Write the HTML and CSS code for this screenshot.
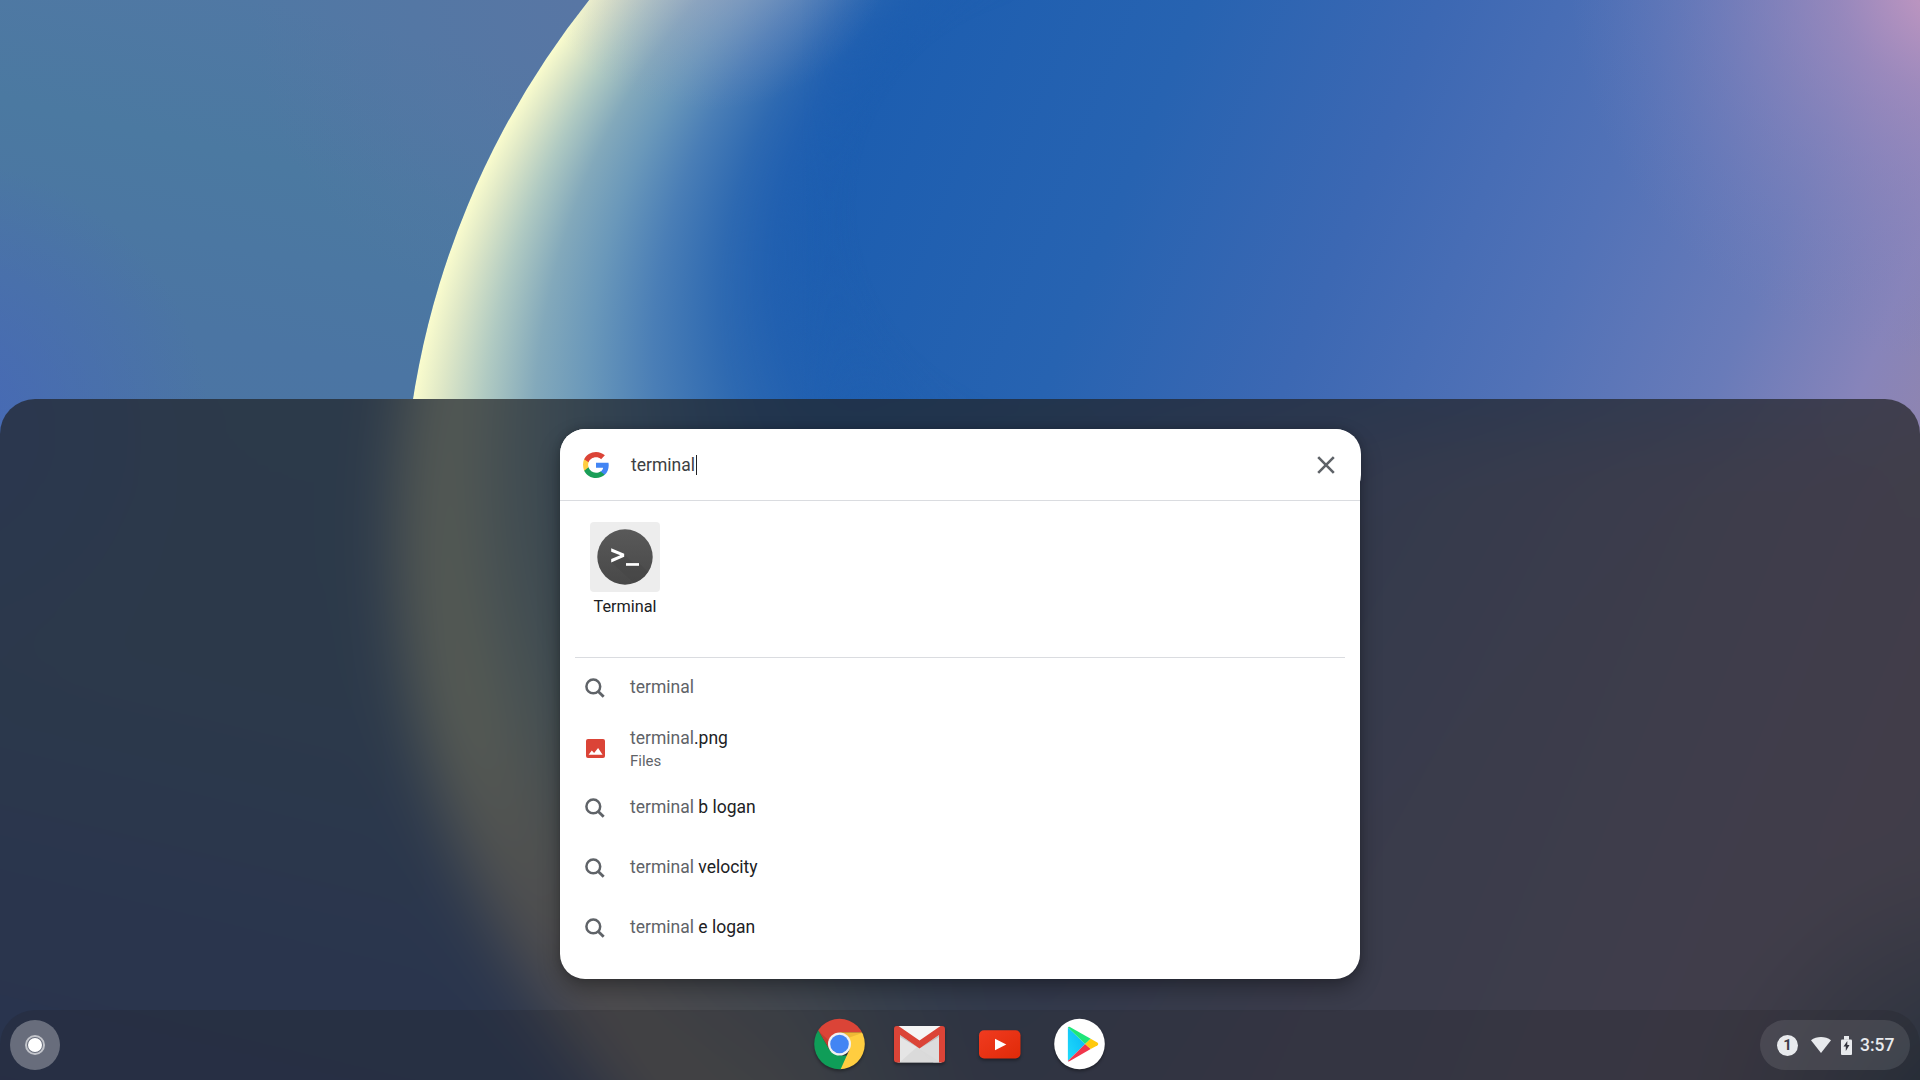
FILE: index.html
```html
<!DOCTYPE html>
<html lang="en">
<head>
<meta charset="utf-8">
<title>Launcher</title>
<link rel="stylesheet" href="styles.css">
</head>
<body>
<svg width="0" height="0" class="defs" aria-hidden="true">
  <symbol id="search" viewBox="0 0 20 20"><circle cx="8.300" cy="8.400" r="6.900" fill="none" stroke="currentColor" stroke-width="2.500"/><path d="M13 13.200l5.700 5.500" stroke="currentColor" stroke-width="2.900"/></symbol>
</svg>
<div class="desktop">
  <svg class="wallpaper" viewBox="0 0 1920 1080" aria-hidden="true">
    <defs>
      <linearGradient id="sky" gradientUnits="userSpaceOnUse" x1="260" y1="0" x2="0" y2="1080">
        <stop offset="0" stop-color="#5078a4"/><stop offset=".14" stop-color="#4b79a1"/><stop offset=".3" stop-color="#4b75a3"/><stop offset=".6" stop-color="#4b74a6"/><stop offset=".8" stop-color="#4568ae"/><stop offset="1" stop-color="#4160b2"/>
      </linearGradient>
      <radialGradient id="skyLeft" gradientUnits="userSpaceOnUse" cx="-60" cy="430" r="270">
        <stop offset="0" stop-color="#4668b8"/><stop offset="1" stop-color="#4668b8" stop-opacity="0"/>
      </radialGradient>
      <radialGradient id="skyTop" gradientUnits="userSpaceOnUse" cx="580" cy="0" r="330">
        <stop offset="0" stop-color="#5876a4"/><stop offset="1" stop-color="#5876a4" stop-opacity="0"/>
      </radialGradient>
      <linearGradient id="core" gradientUnits="userSpaceOnUse" x1="0" y1="0" x2="2069" y2="828">
        <stop offset=".36" stop-color="#1b5db0"/><stop offset=".5" stop-color="#2763b1"/><stop offset=".6" stop-color="#3c68b3"/><stop offset=".7" stop-color="#5272b7"/><stop offset=".78" stop-color="#697bb9"/><stop offset=".84" stop-color="#8784ba"/><stop offset=".9" stop-color="#9585a8"/><stop offset="1" stop-color="#8f7f96"/>
      </linearGradient>
      <radialGradient id="pink" gradientUnits="userSpaceOnUse" cx="1950" cy="-20" r="380">
        <stop offset="0" stop-color="#cd9bc2"/><stop offset=".3" stop-color="#b08fbe" stop-opacity=".65"/><stop offset="1" stop-color="#7b80bb" stop-opacity="0"/>
      </radialGradient>
      <radialGradient id="rim" gradientUnits="userSpaceOnUse" cx="1254" cy="532" r="851.5" fx="1000" fy="100">
        <stop offset=".24" stop-color="#1d5eb0" stop-opacity="0"/><stop offset=".38" stop-color="#2361b0" stop-opacity=".8"/><stop offset=".47" stop-color="#2f6ab1"/><stop offset=".58" stop-color="#4a7eb6"/><stop offset=".69" stop-color="#6a98ba"/><stop offset=".78" stop-color="#83a9bb"/><stop offset=".87" stop-color="#b0cac2"/><stop offset=".95" stop-color="#dfe8c7"/><stop offset="1" stop-color="#fafccd"/>
      </radialGradient>
      <linearGradient id="fade" gradientUnits="userSpaceOnUse" x1="800" y1="0" x2="1020" y2="0">
        <stop offset="0" stop-color="#fff"/><stop offset="1" stop-color="#000"/>
      </linearGradient>
      <radialGradient id="mauve" gradientUnits="userSpaceOnUse" cx="710" cy="-80" r="190">
        <stop offset="0" stop-color="#a79fc8" stop-opacity=".6"/><stop offset="1" stop-color="#8f94c4" stop-opacity="0"/>
      </radialGradient>
      <radialGradient id="corner" gradientUnits="userSpaceOnUse" cx="1980" cy="1140" r="280">
        <stop offset="0" stop-color="#345070"/><stop offset="1" stop-color="#345070" stop-opacity="0"/>
      </radialGradient>
      <linearGradient id="low" gradientUnits="userSpaceOnUse" x1="700" y1="500" x2="1300" y2="1000">
        <stop offset="0" stop-color="#8581a4" stop-opacity="0"/><stop offset="1" stop-color="#8c80a0" stop-opacity=".65"/>
      </linearGradient>
      <radialGradient id="brown" gradientUnits="userSpaceOnUse" cx="560" cy="1020" r="320">
        <stop offset="0" stop-color="#a3829c" stop-opacity=".5"/><stop offset="1" stop-color="#a3829c" stop-opacity="0"/>
      </radialGradient>
      <filter id="soften" filterUnits="userSpaceOnUse" x="-200" y="200" width="2320" height="1080" color-interpolation-filters="sRGB"><feGaussianBlur stdDeviation="32"/></filter>
      <mask id="leftSide" maskUnits="userSpaceOnUse" x="-200" y="-200" width="2320" height="1480"><rect x="-200" y="-200" width="2320" height="1480" fill="url(#fade)"/></mask>
      <clipPath id="disc"><circle cx="1254" cy="532" r="851.5"/></clipPath>
    </defs>
    <g id="scene">
      <rect x="-200" y="-200" width="2320" height="1480" fill="url(#sky)"/>
      <rect x="-200" y="-200" width="2320" height="1480" fill="url(#skyLeft)"/>
      <rect x="-200" y="-200" width="2320" height="1480" fill="url(#skyTop)"/>
      <g clip-path="url(#disc)">
        <rect x="-200" y="-200" width="2320" height="1480" fill="url(#core)"/>
        <rect x="-200" y="-200" width="2320" height="1480" fill="url(#rim)" mask="url(#leftSide)"/>
        <rect y="-100" width="1920" height="480" fill="url(#mauve)"/>
        <rect y="435" width="2120" height="845" fill="url(#low)"/>
        <rect y="435" width="2120" height="845" fill="url(#brown)"/>
      </g>
      <rect x="-200" y="-200" width="2320" height="1480" fill="url(#pink)"/>
      <rect x="-200" y="-200" width="2320" height="1480" fill="url(#corner)"/>
    </g>
  </svg>

  <main class="launcher">
    <svg class="frost" viewBox="0 399 1920 681" aria-hidden="true">
      <use href="#scene" filter="url(#soften)"/>
      <rect y="399" width="1920" height="681" fill="#202124" opacity=".7"/>
    </svg>
    <section class="card">
      <div class="searchbox">
        <svg class="google" viewBox="0 0 48 48"><path fill="#4285f4" d="M47.5 24.5c0-1.600-.2-3.200-.5-4.700H24v9.200h13.200c-.6 3-2.300 5.500-4.900 7.200v6h7.900c4.600-4.200 7.300-10.500 7.300-17.700z"/><path fill="#1a9e58" d="M24 48c6.600 0 12.200-2.200 16.200-5.900l-7.900-6.100c-2.200 1.500-5 2.300-8.300 2.300-6.400 0-11.800-4.300-13.700-10.100H2.100v6.300C6.100 42.600 14.400 48 24 48z"/><path fill="#ffcd40" d="M10.300 28.200c-.5-1.400-.8-3-.8-4.600s.3-3.200.8-4.600v-6.200H2.100C.8 16.100 0 19.700 0 23.600s.8 7.500 2.100 10.800z"/><path fill="#db4437" d="M24 9.500c3.600 0 6.800 1.200 9.400 3.700l7-7C36.200 2.400 30.600 0 24 0 14.400 0 6.100 5.400 2.100 13.300L10.300 19C12.200 13.500 17.600 9.500 24 9.500z"/></svg>
        <span class="query">terminal</span><span class="caret"></span>
        <svg class="close" viewBox="0 0 18 18"><path d="M1.200 1.200l15.600 15.600M16.800 1.200L1.200 16.800" stroke="#5f6368" stroke-width="2.600"/></svg>
      </div>
      <div class="apps">
        <div class="app">
          <div class="tile">
            <svg viewBox="0 0 56 56"><defs><linearGradient id="tg" x1="0" y1="0" x2="0" y2="1"><stop offset="0" stop-color="#595959"/><stop offset="1" stop-color="#484848"/></linearGradient><clipPath id="tc"><circle cx="28" cy="28" r="27.500"/></clipPath></defs><circle cx="28" cy="28" r="27.700" fill="url(#tg)"/><path clip-path="url(#tc)" d="M27 25l28 28H36L14 33zM42 34l20 20H44L29 37z" fill="#444" opacity=".4"/><path d="M14.200 19.200l13 5.600v3l-13 5.600v-3.500l9-3.600-9-3.600z" fill="#fff"/><path d="M29 34.100h13v2.700H29z" fill="#fff"/></svg>
          </div>
          <span class="app-name">Terminal</span>
        </div>
      </div>
      <ul class="results">
        <li><svg class="glass"><use href="#search"/></svg><p>terminal</p></li>
        <li class="file"><svg class="image" viewBox="0 0 19 19"><rect width="19" height="19" rx="2" fill="#db4437"/><path d="M2.600 15.800l3.200-4.400 2.300 2.500 4-5 4.500 6.900z" fill="#fff"/></svg><p>terminal<b>.png</b><small>Files</small></p></li>
        <li><svg class="glass"><use href="#search"/></svg><p>terminal <b>b logan</b></p></li>
        <li><svg class="glass"><use href="#search"/></svg><p>terminal <b>velocity</b></p></li>
        <li><svg class="glass"><use href="#search"/></svg><p>terminal <b>e logan</b></p></li>
      </ul>
    </section>
  </main>

  <footer class="shelf">
    <div class="home"><span></span></div>
    <nav class="pinned">
      <svg viewBox="0 0 52 52"><defs><clipPath id="cc"><circle cx="26" cy="26" r="25.300"/></clipPath></defs><g clip-path="url(#cc)"><path d="M0 0h52v14.600H26L16.100 31.700 3.500 11z" fill="#db4437"/><path d="M4 10.700l12.100 21L26 37.400h9.900L25 56H0V10z" fill="#0f9d58"/><path d="M26 14.600h30V56H25l10.900-24.300z" fill="#ffcd40"/><path d="M26 14.600h24l-14 5z" fill="#e2a62d" opacity=".55"/><path d="M4 12l12 20 2-7z" fill="#9c2f26" opacity=".35"/></g><circle cx="26" cy="26" r="11.500" fill="#f1f1f1"/><circle cx="26" cy="26" r="9.300" fill="#4285f4"/></svg>
      <svg viewBox="0 0 52 52"><path d="M4 8h44v36.500H4z" fill="#e5e5e5"/><path d="M4 8h44L26 27z" fill="#f5f5f5"/><path d="M6 44.500l17.500-15.500L26 31l22 13.500z" fill="#d2d2d2" opacity=".55"/><path d="M26 31l22-16v29.500h-8z" fill="#d8d8d8" opacity=".7"/><path d="M.5 11a3 3 0 013-3H5l21 14.500L47 8h1.500a3 3 0 013 3v30.500a3 3 0 01-3 3h-3V17L26 30.500 6.500 17v27.500h-3a3 3 0 01-3-3z" fill="#db4437"/><path d="M6.500 17L26 30.500 6.500 19zM45.500 17L26 30.500 45.500 19z" fill="#a8a8a8" opacity=".5"/></svg>
      <svg viewBox="0 0 52 52"><defs><linearGradient id="yt" x1="0" y1="0" x2="1" y2="1"><stop offset="0" stop-color="#f03b20"/><stop offset="1" stop-color="#e02a08"/></linearGradient></defs><rect x="5.500" y="12.200" width="41.500" height="28.300" rx="5" fill="url(#yt)"/><path d="M21.500 20.800l11.300 5.700-11.300 5.700z" fill="#fff"/></svg>
      <svg viewBox="0 0 52 52"><defs><linearGradient id="pl" x1="1" y1="0" x2="0" y2="1"><stop offset="0" stop-color="#08b6f5"/><stop offset="1" stop-color="#20dcfb"/></linearGradient></defs><circle cx="26" cy="26" r="25.300" fill="#fff"/><path d="M14.400 9.500v33.400L31.700 26z" fill="url(#pl)"/><path d="M14.400 9.500c.4-.9 1.100-.9 2-.4l20.800 11.700L31.700 26z" fill="#1ee57a"/><path d="M14.400 42.900c.4.700 1.100.6 2 .1l20.800-11.900-5.500-5.100z" fill="#f0364c"/><path d="M37.200 20.800l6.600 3.800c1.300.8 1.300 2 0 2.800l-6.600 3.700-5.500-5.100z" fill="#ffc90d"/></svg>
    </nav>
    <div class="tray">
      <span class="count">1</span>
      <svg class="wifi" viewBox="0 0 20 16"><path d="M0 3.200C5.500-1 14.500-1 20 3.200L10 16z" fill="#e8eaed"/></svg>
      <svg class="battery" viewBox="0 0 11 19"><path d="M3 0h5v3.800H3z" fill="#e8eaed"/><rect y="3.500" width="11" height="15.500" rx="1" fill="#e8eaed"/><path d="M6.300 4.900v4h2.200l-3.700 6v-4.300H2.500z" fill="#33343d"/></svg>
      <time>3:57</time>
    </div>
  </footer>
</div>
</body>
</html>
```
FILE: styles.css
```css
* { box-sizing: border-box; }
body { margin: 0; overflow: hidden; font-family: Roboto, "Liberation Sans", sans-serif; color: #202124; }
.defs { position: absolute; }
.desktop { position: relative; width: 1920px; height: 1080px; padding-top: 399px; overflow: hidden; }
.wallpaper { position: absolute; inset: 0; width: 1920px; height: 1080px; }

.launcher {
  position: relative;
  height: 681px;
  padding-top: 30px;
  border-radius: 35px 35px 0 0;
  overflow: hidden;
}
.frost { position: absolute; inset: 0; width: 1920px; height: 681px; }
.card {
  position: relative;
  width: 800px;
  height: 550px;
  margin: 0 auto;
  background: #fff;
  border-radius: 25px;
  box-shadow: 0 10px 22px rgba(0, 0, 0, .3), 0 0 8px rgba(0, 0, 0, .18);
}
.searchbox {
  display: flex;
  align-items: center;
  width: 801px;
  height: 71px;
  padding: 0 26px 0 23px;
  background: #fff;
  border-radius: 25px;
}
.google { width: 26px; height: 26px; margin-right: 22px; }
.query { font-size: 17.500px; line-height: 24px; color: #3c4043; }
.caret { width: 1px; height: 20px; background: #202124; margin-left: 1px; }
.close { width: 18px; height: 18px; margin-left: auto; }

.apps {
  height: 157px;
  padding: 21px 30px 0;
  border-top: 1px solid #dadce0;
}
.app { width: 70px; display: flex; flex-direction: column; align-items: center; }
.tile { width: 70px; height: 70px; padding: 7px; background: #ededed; border-radius: 4px; }
.tile svg { display: block; width: 56px; height: 56px; }
.app-name { margin-top: 5px; font-size: 16.250px; line-height: 20px; }

.results { list-style: none; margin: 0 15px; padding: 0; border-top: 1px solid #dadce0; }
.results li { display: flex; align-items: center; height: 60px; padding-left: 10px; color: #5f6368; }
.glass { width: 20px; height: 20px; margin: 0 25px 0 0; }
.image { width: 19px; height: 19px; margin: 1px 25px 0 1px; }
.results p { margin: 0 0 2px; font-size: 17.500px; line-height: 24px; }
.results .file p { margin: 2px 0 0; }
.results b { font-weight: 400; color: #202124; }
.results small { display: block; font-size: 15px; line-height: 22px; }

.shelf {
  position: absolute;
  left: 0;
  right: 0;
  bottom: 0;
  height: 70px;
  display: grid;
  grid-template-columns: 1fr auto 1fr;
  align-items: center;
  padding: 0 10px;
  border-radius: 35px 35px 0 0;
  background: rgba(32, 33, 36, .24);
}
.home { display: grid; place-items: center; width: 50px; height: 50px; border-radius: 50%; background: rgba(255, 255, 255, .3); }
.home span { width: 20px; height: 20px; border-radius: 50%; background: #fff; background-clip: content-box; padding: 1px; border: 2px solid rgba(255, 255, 255, .6); }
.pinned { display: flex; gap: 28px; transform: translate(-.5px, -1px); }
.pinned svg { width: 52px; height: 52px; filter: drop-shadow(0 2px 1.500px rgba(0, 0, 0, .35)); }
.tray {
  justify-self: end;
  display: flex;
  align-items: center;
  width: 150px;
  height: 50px;
  padding-left: 17px;
  border-radius: 25px;
  background: rgba(255, 255, 255, .1);
  color: #e8eaed;
}
.count { width: 21px; height: 21px; border-radius: 50%; background: #e8eaed; color: #3f3f49; font-size: 15px; line-height: 21px; font-weight: 700; text-align: center; }
.wifi { width: 20px; height: 16px; margin-left: 13px; }
.battery { width: 11px; height: 19px; margin-left: 10px; }
.tray time { margin-left: 8px; font-size: 17.500px; font-weight: 500; }
```
